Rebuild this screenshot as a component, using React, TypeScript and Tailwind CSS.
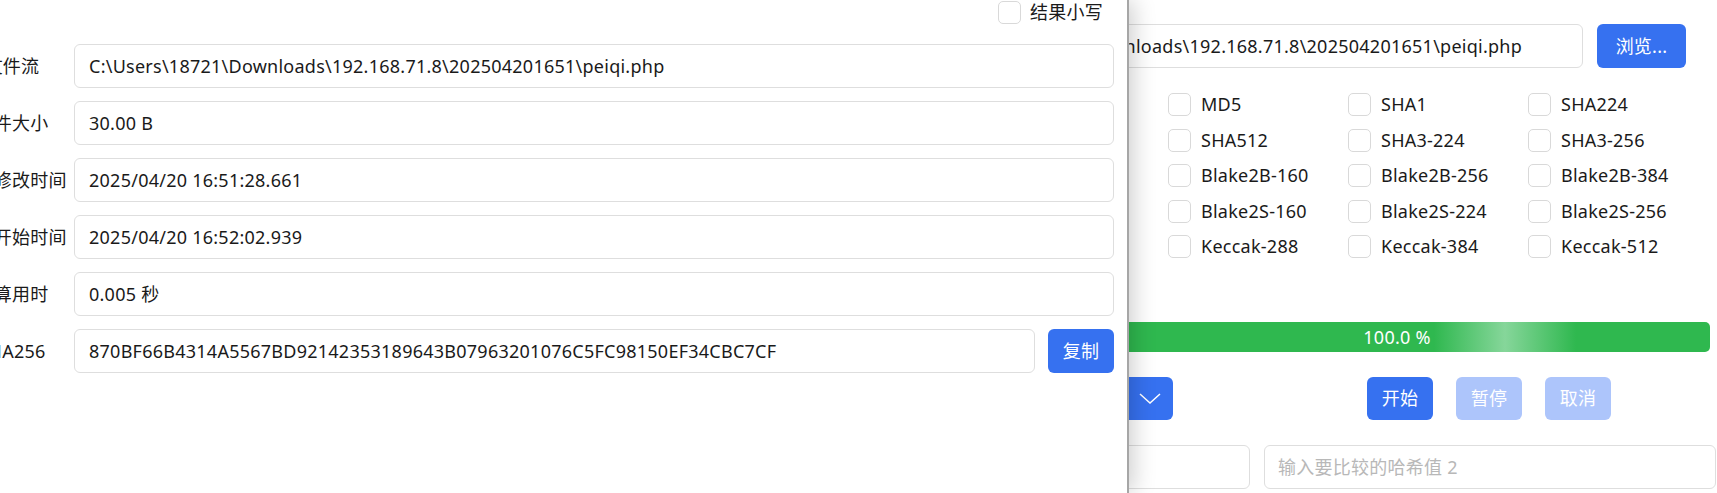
import React from 'react';

const PATH = 'C:\\Users\\18721\\Downloads\\192.168.71.8\\202504201651\\peiqi.php';

const algos = [
  ['CRC32', 'MD5', 'SHA1', 'SHA224'],
  ['SHA384', 'SHA512', 'SHA3-224', 'SHA3-256'],
  ['SHA3-512', 'Blake2B-160', 'Blake2B-256', 'Blake2B-384'],
  ['Blake2B-512', 'Blake2S-160', 'Blake2S-224', 'Blake2S-256'],
  ['Keccak-256', 'Keccak-288', 'Keccak-384', 'Keccak-512'],
];

const Box: React.FC = () => (
  <span className="w-[23px] h-[23px] shrink-0 rounded-[5px] border border-[#d9d9d9] bg-white" />
);

const Field: React.FC<{ label: string; value: string; action?: string }> = ({ label, value, action }) => (
  <div className="flex items-center h-[44px]">
    <div className="-ml-[50px] w-[124px] shrink-0 text-center whitespace-nowrap text-[#1a1a1a]">{label}</div>
    <div className="flex-1 h-full flex items-center rounded-[6px] border border-[#dedede] px-[14px] text-[#1a1a1a] whitespace-nowrap overflow-hidden">
      {value}
    </div>
    {action && (
      <button className="ml-[13px] w-[66px] h-full rounded-[6px] bg-[#3671f0] text-white">{action}</button>
    )}
  </div>
);

export default function App() {
  return (
    <div className="relative w-[1717px] h-[493px] overflow-hidden bg-white text-[18px] tracking-[0.25px] font-['Noto_Sans','Noto_Sans_CJK_SC',sans-serif]">
      {/* background window */}
      <div className="ml-[860px] w-[857px] pt-[24px]">
        <div className="flex gap-[14px] pl-[45px]">
          <div className="w-[678px] h-[44px] flex items-center justify-end pr-[60px] rounded-[6px] border border-[#dedede] text-[#1a1a1a] whitespace-nowrap overflow-hidden">
            {PATH}
          </div>
          <button className="w-[89px] h-[44px] rounded-[6px] bg-[#3671f0] text-white">浏览...</button>
        </div>

        <div className="mt-[19px] ml-[128px] grid grid-cols-[180px_180px_180px_180px]">
          {algos.flat().map((a) => (
            <div key={a} className="h-[35.5px] flex items-center gap-[10px] text-[#1a1a1a]">
              <Box />
              <span>{a}</span>
            </div>
          ))}
        </div>

        <div className="relative mt-[57.5px] ml-[224px] w-[626px] h-[30px] rounded-[5px] bg-[#2fb84f] overflow-hidden flex items-center justify-center text-white">
          <span className="absolute left-[350px] top-0 h-full w-[142px] bg-gradient-to-r from-transparent via-[#86d69a] to-transparent" />
          <span className="relative">100.0 %</span>
        </div>

        <div className="mt-[25px] h-[43px] flex">
          <div className="ml-[200px] w-[113px] h-full rounded-[6px] bg-[#3671f0] flex items-center justify-end pr-[12px]">
            <svg width="22" height="11" viewBox="0 0 22 11" fill="none">
              <polyline points="1,1 11,10 21,1" stroke="white" strokeWidth="1.5" />
            </svg>
          </div>
          <div className="ml-[194px] flex gap-[23px]">
            <button className="w-[66px] h-full rounded-[6px] bg-[#3671f0] text-white">开始</button>
            <button className="w-[66px] h-full rounded-[6px] bg-[#adc5fb] text-white">暂停</button>
            <button className="w-[66px] h-full rounded-[6px] bg-[#adc5fb] text-white">取消</button>
          </div>
        </div>

        <div className="mt-[25px] flex gap-[14px]">
          <div className="ml-[40px] w-[350px] h-[44px] rounded-[6px] border border-[#dedede]" />
          <div className="w-[452px] h-[44px] flex items-center px-[13px] rounded-[6px] border border-[#dedede] text-[#b8b8b8]">
            输入要比较的哈希值 2
          </div>
        </div>
      </div>

      {/* dialog window on top */}
      <div className="absolute left-0 top-0 w-[1129px] h-[493px] bg-white border-r-2 border-[#a6a6a6] shadow-[4px_0_22px_rgba(0,0,0,0.2)] pt-[1px] pr-[13px]">
        <div className="h-[23px] flex items-center justify-end gap-[9px] pr-[11px]">
          <Box />
          <span className="text-[#1a1a1a]">结果小写</span>
        </div>
        <div className="mt-[20px] flex flex-col gap-[13px]">
          <Field label="文件流" value={PATH} />
          <Field label="文件大小" value="30.00 B" />
          <Field label="文件修改时间" value="2025/04/20 16:51:28.661" />
          <Field label="计算开始时间" value="2025/04/20 16:52:02.939" />
          <Field label="计算用时" value="0.005 秒" />
          <Field label="SHA256" value="870BF66B4314A5567BD92142353189643B07963201076C5FC98150EF34CBC7CF" action="复制" />
        </div>
      </div>
    </div>
  );
}
